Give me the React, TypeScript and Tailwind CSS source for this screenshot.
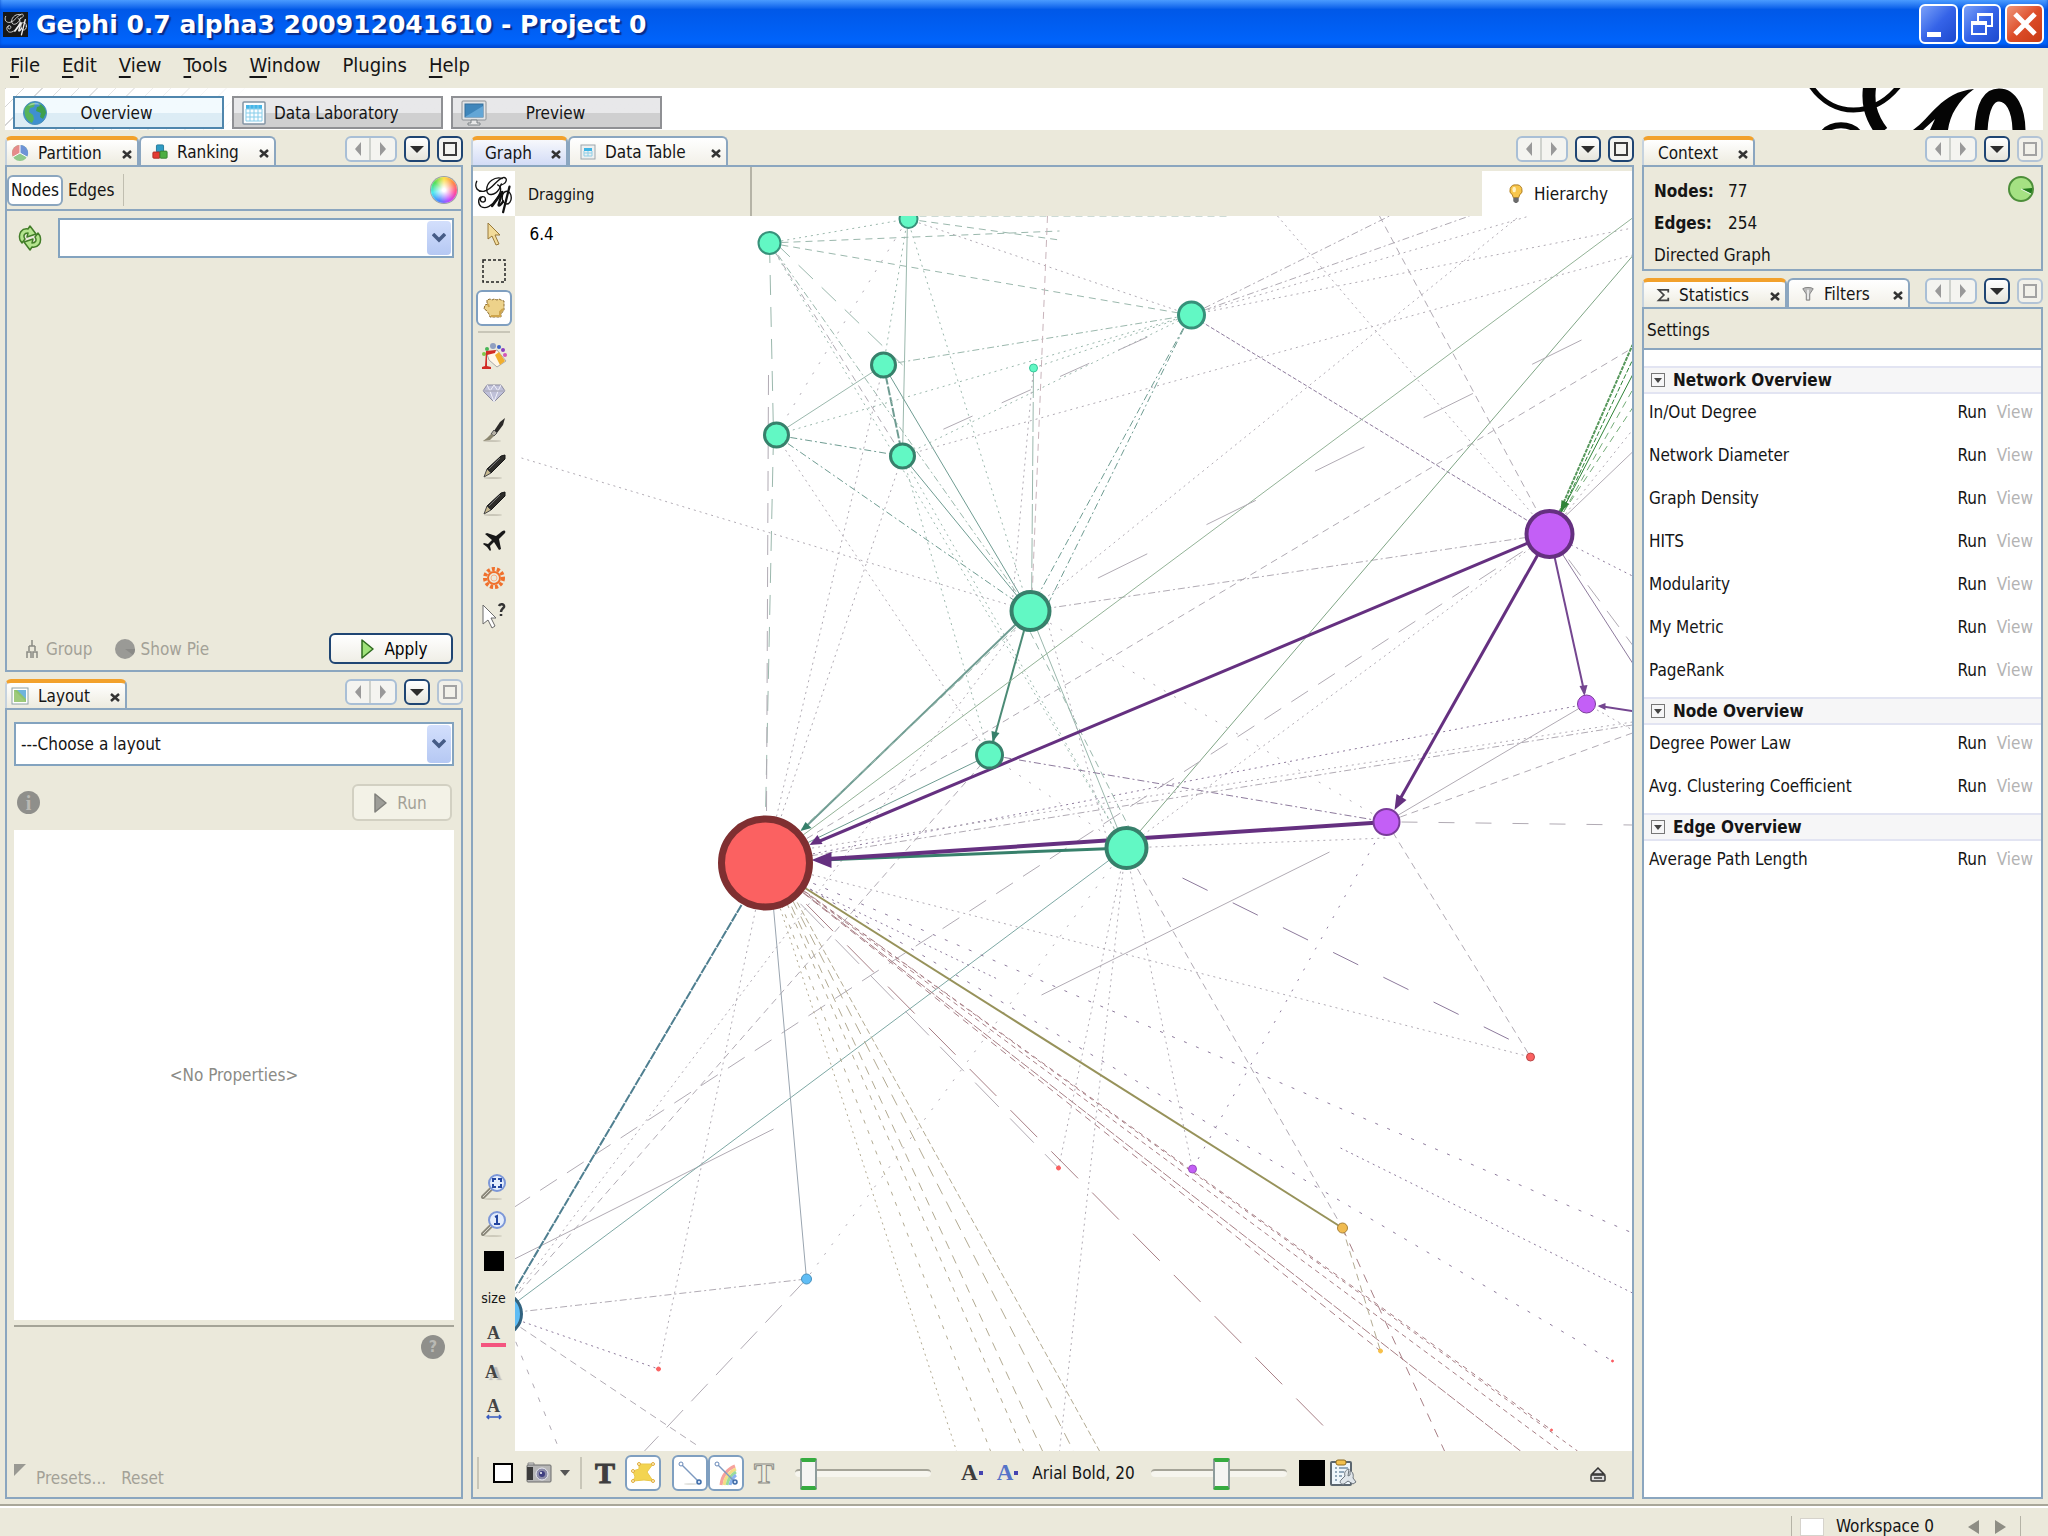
import React from 'react';
import clsx from 'clsx';

type Point = [number, number];

const NODES: { at: Point; r: number; fill: string; stroke: string; sw: number }[] = [
  { at: [770, 243], r: 11, fill: '#62f8c4', stroke: '#37917a', sw: 2 },
  { at: [909, 219], r: 9, fill: '#62f8c4', stroke: '#37917a', sw: 2 },
  { at: [884, 365], r: 12, fill: '#62f8c4', stroke: '#37806b', sw: 3 },
  { at: [777, 435], r: 12, fill: '#62f8c4', stroke: '#37806b', sw: 3 },
  { at: [903, 456], r: 12, fill: '#62f8c4', stroke: '#37806b', sw: 3 },
  { at: [1031, 611], r: 19, fill: '#62f8c4', stroke: '#37806b', sw: 4 },
  { at: [990, 755], r: 13, fill: '#62f8c4', stroke: '#37806b', sw: 3 },
  { at: [1127, 848], r: 20, fill: '#62f8c4', stroke: '#37806b', sw: 4 },
  { at: [1192, 315], r: 13, fill: '#62f8c4', stroke: '#37917a', sw: 3 },
  { at: [1034, 368], r: 4, fill: '#62f8c4', stroke: '#37c79a', sw: 1 },
  { at: [766, 863], r: 44, fill: '#fb6161', stroke: '#7f2f31', sw: 7 },
  { at: [1550, 534], r: 23, fill: '#c35ff6', stroke: '#653080', sw: 4 },
  { at: [1587, 704], r: 9, fill: '#c35ff6', stroke: '#7a3b9a', sw: 1 },
  { at: [1387, 822], r: 13, fill: '#c35ff6', stroke: '#7a3b9a', sw: 2 },
  { at: [1193, 1169], r: 4, fill: '#c35ff6', stroke: '#9a4bc0', sw: 1 },
  { at: [501, 1314], r: 21, fill: '#5fbdf5', stroke: '#31627f', sw: 3 },
  { at: [807, 1279], r: 5, fill: '#5fbdf5', stroke: '#4791bd', sw: 1 },
  { at: [1531, 1057], r: 4, fill: '#fb6161', stroke: '#b94848', sw: 1 },
  { at: [1059, 1168], r: 2, fill: '#fb6161', stroke: '#fb6161', sw: 1 },
  { at: [659, 1369], r: 2, fill: '#fb6161', stroke: '#fb6161', sw: 1 },
  { at: [1552, 1430], r: 1, fill: '#fb6161', stroke: '#fb6161', sw: 1 },
  { at: [1613, 1361], r: 1, fill: '#fb4161', stroke: '#fb6161', sw: 1 },
  { at: [1343, 1228], r: 5, fill: '#f0bb50', stroke: '#a8823a', sw: 1 },
  { at: [1381, 1351], r: 2, fill: '#f7c04a', stroke: '#f7c04a', sw: 1 },
];

const DOT = '2 4';
const DASH = '7 5';
const DASHDOT = '7 3 2 3';
const SPARSE = '2 10';
const LONG = '20 12';

const GREY = '#b1abb4';
const MINT = '#9bb8ad';
const TEAL = '#6f9c92';
const PLUM = '#8d7a9c';
const TAN = '#b3ab93';
const ROSE = '#a87f86';

// x1, y1, x2, y2, colour, dash, width
type Edge = [number, number, number, number, string, string?, number?];

const EDGES: Edge[] = [
  // green cluster
  [770, 243, 908, 219, MINT, DOT],
  [770, 243, 1060, 231, MINT, DASH],
  [908, 216, 1230, 216, MINT, DASH],
  [770, 243, 1191, 315, MINT, DASH],
  [908, 219, 1191, 315, GREY, DOT],
  [908, 219, 1060, 240, MINT, DASH],
  [770, 243, 1030, 611, MINT, DASHDOT],
  [776, 243, 903, 365, MINT, LONG],
  [770, 243, 903, 456, GREY, DASH],
  [770, 243, 1126, 848, MINT, DOT],
  [770, 243, 774, 435, MINT, LONG],
  [774, 435, 766, 815, MINT, LONG],
  [769, 375, 767, 815, GREY, LONG],
  [908, 219, 884, 365, MINT, DOT],
  [908, 219, 903, 456, MINT],
  [908, 219, 1030, 611, MINT, DOT],
  [908, 219, 776, 435, GREY, SPARSE],
  [884, 365, 776, 435, MINT],
  [884, 365, 903, 456, TEAL, '9 2', 2],
  [884, 365, 1030, 611, TEAL],
  [884, 365, 1191, 315, MINT, DASHDOT],
  [884, 365, 766, 863, GREY, DOT],
  [776, 435, 903, 456, TEAL, DASHDOT, 1],
  [776, 435, 1030, 611, TEAL, DASHDOT, 1],
  [776, 435, 1191, 315, MINT, DOT],
  [776, 435, 990, 755, GREY, DOT],
  [903, 456, 1030, 611, TEAL],
  [903, 456, 1191, 315, MINT, DOT],
  [903, 456, 990, 755, MINT, DOT],
  [903, 456, 1126, 848, MINT, DOT],
  [903, 456, 766, 863, GREY, DOT],
  [903, 456, 1633, 255, GREY, DOT],
  [1034, 368, 1191, 315, MINT, DOT],
  [1034, 368, 1032, 611, MINT, '30 4'],
  [1034, 368, 1012, 611, GREY, DOT],
  [1048, 216, 1032, 611, '#c9b4bb', DASH],
  [1191, 315, 1030, 611, TEAL, DASHDOT, 1],
  [1191, 315, 1045, 611, TEAL, DASHDOT, 1],
  [1191, 315, 1470, 216, GREY, DASHDOT],
  [1191, 315, 1530, 216, GREY, DOT],
  [1191, 315, 1633, 228, GREY, DOT],
  [1191, 315, 1390, 216, GREY, DASHDOT],
  [1191, 315, 1550, 534, PLUM, '4 2', 1],
  [522, 458, 1030, 611, GREY, DOT],
  [1030, 611, 1387, 822, GREY, SPARSE],
  [1030, 611, 1550, 534, GREY, DASHDOT],
  [1030, 611, 1520, 216, GREY, DOT],
  [766, 863, 1633, 348, GREY, DASH],
  [1030, 611, 806, 827, TEAL, '', 2],
  [1030, 611, 990, 755, '#4c8b76', '', 2],
  [1030, 611, 1126, 848, MINT],
  [1045, 611, 1110, 848, GREY, DOT],
  [1020, 611, 1140, 848, MINT, DASH],
  [1030, 611, 501, 1314, GREY, DOT],
  [990, 755, 766, 863, TEAL],
  [990, 755, 501, 1314, GREY, DASH],
  [990, 755, 1126, 848, GREY, SPARSE],
  [990, 755, 1387, 822, PLUM, DASHDOT, 1],
  [1034, 611, 766, 863, MINT, DASH],

  // spokes leaving through the right border
  [1633, 218, 766, 863, '#93b397'],
  [1633, 256, 1126, 848, '#7fa585'],
  [1278, 216, 1550, 534, GREY, DOT],
  [1380, 216, 1550, 534, GREY, DASH],
  [1560, 512, 1633, 345, '#57985c', '4 1', 2],
  [1562, 512, 1633, 360, '#2f8438', '5 2', 1],
  [1562, 512, 1633, 375, '#2f8438', '', 1],
  [1564, 512, 1633, 390, '#74ad78', DASH, 1],
  [1564, 512, 1633, 408, '#74ad78', DASH, 1],
  [1566, 514, 1633, 430, GREY, DOT],
  [1566, 516, 1633, 452, GREY],
  [1550, 534, 1633, 576, PLUM, DOT],
  [1550, 534, 1633, 663, PLUM],
  [1550, 534, 1633, 645, GREY, LONG],
  [1550, 534, 515, 1207, GREY, LONG],
  [1550, 534, 1126, 848, GREY, DOT],
  [1587, 704, 766, 863, PLUM, DOT],
  [1633, 725, 766, 863, GREY, DASHDOT],
  [1633, 722, 800, 850, GREY, DOT],
  [1587, 704, 1387, 822, GREY],
  [1633, 733, 1387, 822, GREY, DASH],
  [1587, 704, 1633, 730, GREY, DOT],
  [1402, 822, 1633, 825, GREY, '16 21'],
  [1582, 340, 1060, 597, GREY, '55 66'],
  [1148, 337, 920, 440, GREY, '32 32'],
  [774, 1129, 515, 1259, GREY],
  [1330, 852, 1042, 995, GREY],

  // around the lower hubs
  [1126, 848, 501, 1314, '#7da8a4'],
  [1126, 848, 807, 1279, GREY, SPARSE],
  [1126, 848, 1059, 1168, GREY, DOT],
  [1126, 848, 1060, 1451, GREY, DOT],
  [1126, 848, 1193, 1169, GREY, DOT],
  [1126, 848, 1343, 1228, GREY, DASH],
  [1183, 878, 1515, 1042, PLUM, '28 28'],
  [1387, 822, 1531, 1057, GREY, DASH],
  [1387, 822, 1193, 1169, PLUM, SPARSE],
  [1126, 848, 1387, 838, GREY, DOT],
  [501, 1314, 807, 1279, GREY, DASHDOT],
  [501, 1314, 659, 1369, PLUM, DOT],
  [501, 1314, 700, 1447, GREY, DASH],
  [505, 1314, 560, 1450, GREY, '5 10'],
  [807, 1279, 645, 1451, GREY, '24 12'],
  [766, 863, 659, 1369, GREY, DOT],
  [770, 863, 807, 1279, '#9aa5b0'],
  [742, 905, 501, 1314, '#4f7f90', '9 1', 2],
  [766, 863, 957, 1451, TAN, DOT],
  [766, 863, 991, 1451, TAN, '4 7'],
  [770, 863, 1024, 1451, TAN, '5 6'],
  [772, 863, 1043, 1451, TAN, '9 7'],
  [774, 863, 1074, 1451, TAN, '12 8'],
  [776, 863, 1100, 1451, TAN, '6 3'],
  [766, 863, 1327, 1429, ROSE, '38 20'],
  [766, 868, 1059, 1168, GREY, '34 16'],
  [766, 863, 1531, 1057, GREY, DOT],
  [766, 863, 1633, 1233, PLUM, '3 10'],
  [766, 863, 1613, 1361, PLUM, '3 10'],
  [800, 884, 1000, 980, PLUM, DOT],
  [1341, 1148, 1633, 1293, PLUM, DOT],
  [766, 863, 1343, 1228, '#97925a', '', 2],
  [766, 863, 1521, 1451, ROSE, '10 2', 1],
  [766, 863, 1560, 1451, ROSE, '5 4', 1],
  [766, 863, 1578, 1451, ROSE, '4 4', 1],
  [766, 863, 1552, 1430, ROSE, '5 5'],
  [766, 863, 1381, 1351, ROSE, DASH],
  [1343, 1228, 1381, 1351, TAN, DASH],
  [1343, 1228, 1445, 1451, ROSE, '9 8'],

  // heavy edges
  [1126, 848, 822, 860, '#37806b', '', 3],
  [1387, 822, 828, 859, '#653080', '', 4],
  [1550, 534, 818, 842, '#653080', '', 3],
  [1550, 534, 1400, 800, '#653080', '', 3],
  [1550, 534, 1585, 693, '#744690', '', 2],
  [1633, 711, 1600, 706, '#744690', '', 2],
];

const ARROWS: { points: string; fill: string }[] = [
  { points: '812,860 832,852 832,868', fill: '#653080' },
  { points: '810,845 818,835 823,844', fill: '#653080' },
  { points: '1395,810 1397,794 1407,800', fill: '#653080' },
  { points: '1585,696 1580,686 1588,685', fill: '#744690' },
  { points: '1598,706 1606,703 1606,710', fill: '#744690' },
  { points: '801,831 806,822 812,828', fill: '#37806b' },
  { points: '993,742 992,731 1000,733', fill: '#37806b' },
  { points: '1561,512 1562,500 1570,504', fill: '#2f8438' },
];

const STATISTICS = [
  {
    title: 'Network Overview',
    metrics: ['In/Out Degree', 'Network Diameter', 'Graph Density', 'HITS', 'Modularity', 'My Metric', 'PageRank'],
  },
  { title: 'Node Overview', metrics: ['Degree Power Law', 'Avg. Clustering Coefficient'] },
  { title: 'Edge Overview', metrics: ['Average Path Length'] },
];

const MENU = ['File', 'Edit', 'View', 'Tools', 'Window', 'Plugins', 'Help'];

/* ---------- icons ---------- */

const GephiMark: React.FC<{ className?: string; color?: string }> = ({ className, color = '#111' }) => (
  <svg viewBox="0 0 44 44" className={className} fill="none" stroke={color} strokeLinecap="round">
    <path d="M3 8c-3 7 1 12 8 11 10-2 13-13 21-15 5-1 5 6-2 8" strokeWidth="1.5" />
    <path d="M31 5c-8-3-17 4-17 12 0 8 9 7 14-1l2-5" strokeWidth="1.5" />
    <path d="M26 12c5 2 4 8-1 15-5 8-12 12-17 9-4-3-4-10 1-11 4-1 5 5 1 6-3 0-4-3-2-5" strokeWidth="1.5" />
    <path d="M31 20L20 35" strokeWidth="3" />
    <path d="M31 20l-4 14c0 2 3 0 5-4" strokeWidth="2.5" />
    <ellipse cx="36" cy="26" rx="5" ry="7" strokeWidth="1.5" />
    <path d="M39 14L32 42" strokeWidth="2.5" />
  </svg>
);

const GlobeIcon = () => (
  <svg viewBox="0 0 24 24" className="size-6">
    <circle cx="12" cy="12" r="11.5" fill="#3f8fd0" stroke="#4a90b8" />
    <path d="M2 7c3-5 8-6 10-5l-1 4-4 1-1 4 4 3 1 4-2 4C4 20 0 14 2 7z" fill="#57b45a" />
    <path d="M15 2c5 2 8 6 8 10l-3 6-3-2 1-4-5-2 1-4 3-1z" fill="#3fa04c" />
    <path d="M5 5c4-4 10-4 13-1-5-1-9 0-13 1z" fill="#fff" opacity=".4" />
  </svg>
);

const TableIcon = () => (
  <svg viewBox="0 0 24 24" className="size-6">
    <rect x="1" y="1" width="22" height="22" rx="1" fill="#fafdff" stroke="#8294a4" strokeWidth="1.5" />
    <rect x="4" y="4" width="16" height="4" fill="#45b5e8" />
    <path d="M4 8h16M4 12h16M4 16h16M4 20h16M4 8v12M8 4v16M12 4v16M16 4v16M20 8v12" stroke="#86cdea" />
  </svg>
);

const SmallTableIcon = () => (
  <svg viewBox="0 0 16 16" className="size-4">
    <rect x="1" y="1" width="14" height="14" fill="#eef0f0" stroke="#9ca6ac" />
    <rect x="4" y="4" width="8" height="3" fill="#3fb4e4" />
    <path d="M4 7v5h8V7M8 7v5M4 9h8" fill="none" stroke="#8fcfe8" />
  </svg>
);

const MonitorIcon = () => (
  <svg viewBox="0 0 26 26" className="size-[26px]">
    <rect x="1" y="1" width="24" height="19" rx="1" fill="#e2e4e6" stroke="#8d9296" />
    <rect x="4" y="4" width="18" height="13" fill="#3f86bb" stroke="#356f9c" />
    <path d="M4 17L22 6v11z" fill="#63a6d6" />
    <path d="M10 20h6v3h3v2H7v-2h3z" fill="#e8e8e8" stroke="#7d8286" />
  </svg>
);

const PartitionIcon = () => (
  <svg viewBox="0 0 18 18" className="size-[18px]">
    <circle cx="9" cy="9" r="8" fill="#8fc98c" />
    <path d="M9 9V1a8 8 0 0 1 7 12z" fill="#6d93d6" />
    <path d="M9 9V1a8 8 0 0 0-8 8 8 8 0 0 0 1 4z" fill="#e58b8b" />
    <path d="M9 1v8l7 4M9 9l-7 4" stroke="#fff" fill="none" />
  </svg>
);

const RankingIcon = () => (
  <svg viewBox="0 0 18 18" className="size-4">
    <rect x="5" y="1" width="8" height="8" rx="1" fill="#2f9bc4" stroke="#1f7595" />
    <rect x="1" y="9" width="8" height="7" rx="1" fill="#e23b33" stroke="#a82822" />
    <rect x="9" y="8" width="8" height="8" rx="1" fill="#4cae42" stroke="#347e2d" />
  </svg>
);

const LayoutIcon = () => (
  <svg viewBox="0 0 18 18" className="size-[18px]">
    <rect x="1" y="1" width="16" height="16" fill="#fff" stroke="#8fa2a6" />
    <rect x="3" y="3" width="12" height="12" fill="#8fc46e" />
    <path d="M6 3h9v9z" fill="#6fb4dc" />
    <path d="M3 3l12 12H3z" fill="#9fca7c" />
  </svg>
);

const SigmaIcon = () => (
  <svg viewBox="0 0 16 16" className="size-[14px]" fill="none" stroke="#444" strokeWidth="2">
    <path d="M14 5V2H3l6 6-6 6h11v-3" />
  </svg>
);

const FunnelIcon = () => (
  <svg viewBox="0 0 16 18" className="h-4 w-[14px]">
    <path d="M2 3c2-2 10-2 12 0l-4 6v7H6V9z" fill="#b9b9b9" stroke="#7a7a7a" />
    <path d="M8 4v11" stroke="#eee" strokeWidth="2" />
  </svg>
);

const ColorWheel = () => (
  <span className="block size-[26px] rounded-full bg-[radial-gradient(circle,#fff_8%,transparent_62%),conic-gradient(#ffe14a,#ff8a4a,#ff4a9a,#c04aff,#4a8aff,#4ae8f0,#52e05a,#ffe14a)] ring-1 ring-[#9aa0a6]" />
);

const RefreshIcon = () => (
  <svg viewBox="0 0 26 26" className="size-[26px]" strokeLinejoin="round">
    <path d="M3 15C1 8 5 3 11 4l2-3 6 8-9 3 1-4c-4 0-5 3-3 6l-3 4z" fill="#b4e48e" stroke="#427d28" strokeWidth="1.5" />
    <path d="M23 11c2 7-2 12-8 11l-2 3-6-8 9-3-1 4c4 0 5-3 3-6l3-4z" fill="#b4e48e" stroke="#427d28" strokeWidth="1.5" />
  </svg>
);

const PieIcon = () => (
  <svg viewBox="0 0 28 28" className="size-7">
    <circle cx="14" cy="14" r="12" fill="#a5e183" stroke="#4d8f3a" strokeWidth="2" />
    <path d="M14 14l11-1c0 3 0 4-1 6z" fill="#217a1c" />
    <path d="M14 14l10 5" stroke="#f3fbef" />
  </svg>
);

const GreyPie = () => (
  <svg viewBox="0 0 20 20" className="size-5">
    <circle cx="10" cy="10" r="10" fill="#9a9a96" />
    <path d="M10 10h10c0 3-1 4-2 6z" fill="#8a8a87" />
  </svg>
);

const GroupIcon = () => (
  <svg viewBox="0 0 14 20" className="h-5 w-[14px]" fill="none" stroke="#8a8a84" strokeWidth="1.5">
    <path d="M7 1v6M4 7h6M4 7v5M10 7v5M2 19v-6h4v6M8 19v-6h4v6" />
  </svg>
);

const PlayIcon: React.FC<{ disabled?: boolean }> = ({ disabled }) => (
  <svg viewBox="0 0 14 22" className="h-[22px] w-[14px]">
    <path d="M2 2v18l11-9z" fill={disabled ? '#9d9d98' : '#9fe27a'} stroke={disabled ? '#80807c' : '#2f6b1f'} strokeWidth="1.5" strokeLinejoin="round" />
  </svg>
);

const BulbIcon = () => (
  <svg viewBox="0 0 16 22" className="h-5 w-4">
    <path d="M8 1a6 6 0 0 1 4 11l-1 3H5l-1-3A6 6 0 0 1 8 1z" fill="#f8c64b" stroke="#a97820" />
    <ellipse cx="6" cy="6" rx="2" ry="3" fill="#fff2c2" />
    <path d="M5 15h6v4l-2 2H7l-2-2z" fill="#6b6b6b" />
  </svg>
);

const PointerIcon = () => (
  <svg viewBox="0 0 24 24" className="size-6">
    <path d="M6 1v16l4-3 4 9 3-1-4-9h5z" fill="#f3dc9a" stroke="#98793a" />
  </svg>
);

const MarqueeIcon = () => (
  <svg viewBox="0 0 24 24" className="size-6">
    <rect x="1" y="1" width="22" height="22" fill="none" stroke="#222" strokeWidth="1.5" strokeDasharray="3 2" />
  </svg>
);

const HandIcon = () => (
  <svg viewBox="0 0 24 24" className="size-6">
    <path d="M5 7V4l3-1 2 1 2-1 3 1 2-1 2 1 3 1v9l-3 4v3H8l-1-3-3-4-2-1 1-4 3-1z" fill="#edd28a" stroke="#8c6c30" strokeDasharray="3 1" />
    <path d="M6 8l1 3M9 20h9v-4l3-3" fill="none" stroke="#cfa54c" strokeWidth="2" />
  </svg>
);

const PaintIcon = () => (
  <svg viewBox="0 0 26 26" className="size-[26px]">
    <circle cx="12" cy="3" r="3" fill="#8f9fc0" />
    <circle cx="18" cy="4" r="2" fill="#3a62c8" />
    <circle cx="22" cy="7" r="2" fill="#8a3fc0" />
    <circle cx="24" cy="12" r="2" fill="#d257b8" />
    <circle cx="6" cy="6" r="2" fill="#47b556" />
    <circle cx="3" cy="11" r="2" fill="#7fc84a" />
    <path d="M6 11l10-4 9 11-9 6-8-7z" fill="#fff6e8" stroke="#aaa" />
    <path d="M14 12l4-3 6 9-5 4z" fill="#f0ae2e" />
    <path d="M5 8l10-1-1 3-8 2v11l4 1v2H1v-2l3-1z" fill="#d22b25" />
  </svg>
);

const DiamondIcon = () => (
  <svg viewBox="0 0 24 22" className="h-[22px] w-6" stroke="#8b8ba0" strokeWidth="1">
    <path d="M5 3h14l4 6-11 11L1 9z" fill="#bfc0d8" />
    <path d="M1 9h22M5 3l3 6 4-6 4 6 3-6M8 9l4 11 4-11" fill="none" stroke="#f2f2fa" />
    <path d="M1 9h22" />
  </svg>
);

const BrushIcon = () => (
  <svg viewBox="0 0 24 26" className="h-[26px] w-6">
    <ellipse cx="10" cy="24" rx="9" ry="1" fill="#c9c6b8" />
    <path d="M23 1l-2 7-6 8-3-2 6-9z" fill="#2b2a28" />
    <path d="M12 13l3 3-3 3-3-2z" fill="#b6b2a6" stroke="#555" />
    <path d="M9 17l3 2-4 4-7 1 4-3z" fill="#8b866f" />
  </svg>
);

const PencilIcon = () => (
  <svg viewBox="0 0 24 26" className="h-[26px] w-6">
    <ellipse cx="11" cy="24" rx="9" ry="1" fill="#c9c6b8" />
    <path d="M19 2l4-1v4L9 19l-4-4z" fill="#2e2d2a" stroke="#171717" />
    <path d="M18 4L7 15" stroke="#777" />
    <path d="M5 15l4 4-7 4z" fill="#c7b98f" stroke="#444" />
  </svg>
);

const PlaneIcon = () => (
  <svg viewBox="0 0 24 24" className="size-6">
    <path d="M23 2c-1-1-3 0-5 2l-4 3-9-3-2 1 7 6-4 4-4-1-1 1 4 3 3 4 1-1-1-4 4-4 5 8 2-1-2-10 4-4c2-2 3-3 2-4z" fill="#181818" />
  </svg>
);

const GearIcon = () => (
  <svg viewBox="0 0 24 24" className="size-6" fill="none" stroke="#f0702c">
    <circle cx="12" cy="12" r="9" strokeWidth="4" strokeDasharray="3 2" />
    <circle cx="12" cy="12" r="6" strokeWidth="2" />
    <circle cx="12" cy="12" r="3" stroke="#f7b08a" />
  </svg>
);

const WhatsThisIcon = () => (
  <svg viewBox="0 0 26 28" className="h-7 w-[26px]">
    <path d="M2 4v19l5-4 4 8 3-2-4-8h5z" fill="#fff" stroke="#6b6b6b" />
    <path d="M18 5c1-3 6-2 5 1-1 2-3 2-3 5M20 13v2" fill="none" stroke="#333" strokeWidth="2.5" />
  </svg>
);

const ZoomIcon: React.FC<{ fit?: boolean }> = ({ fit }) => (
  <svg viewBox="0 0 26 26" className="size-[26px]">
    <ellipse cx="12" cy="25" rx="9" ry="1" fill="#cdcabb" />
    <path d="M10 15l-8 8" stroke="#8c897c" strokeWidth="4" strokeLinecap="round" />
    <path d="M10 15l-8 8" stroke="#d8d6cb" strokeWidth="1" />
    <circle cx="16" cy="9" r="8" fill="#e4edfb" stroke="#7c97d8" strokeWidth="2" />
    {fit ? (
      <path d="M12 8V5h3M17 5h3v3M20 10v3h-3M15 13h-3v-3" fill="none" stroke="#2346a0" strokeWidth="2" />
    ) : (
      <path d="M14 6l2-1v8M13 13h6" fill="none" stroke="#2346a0" strokeWidth="2" />
    )}
  </svg>
);

const CameraIcon = () => (
  <svg viewBox="0 0 26 22" className="h-[22px] w-[26px]">
    <path d="M2 1h6v3H2z" fill="#ddd" stroke="#888" />
    <rect x="1" y="3" width="24" height="17" rx="1" fill="#b6b6b6" stroke="#6d6d6d" />
    <rect x="1" y="5" width="6" height="13" fill="#3b3b3b" />
    <circle cx="16" cy="12" r="6" fill="#8c8ca8" stroke="#e8e8f0" />
    <circle cx="16" cy="12" r="3" fill="#3e3e80" />
    <circle cx="15" cy="11" r="1" fill="#fff" />
  </svg>
);

const HullIcon = () => (
  <svg viewBox="0 0 26 24" className="h-6 w-[26px]">
    <path d="M3 10l6-2V3h14l-6 8 6 9-9-1-11 1 2-4z" fill="#f3d450" stroke="#e9c84a" />
    <g fill="#fff4c8" stroke="#e0aa3a">
      <circle cx="9" cy="3" r="1.5" />
      <circle cx="23" cy="3" r="1.5" />
      <circle cx="3" cy="20" r="1.5" />
      <circle cx="23" cy="20" r="1.5" />
      <circle cx="3" cy="10" r="1.5" />
    </g>
  </svg>
);

const EdgeIcon: React.FC<{ rainbow?: boolean }> = ({ rainbow }) => (
  <svg viewBox="0 0 26 26" className="size-[26px]" fill="none">
    {rainbow && (
      <g strokeWidth="3">
        <path d="M8 25C9 15 15 9 22 6" stroke="#f6a29c" />
        <path d="M11 25c1-8 5-13 12-16" stroke="#f4dd85" />
        <path d="M14 25c1-6 4-10 9-13" stroke="#9bdc9a" />
        <path d="M17 25c1-4 2-7 6-10" stroke="#8bb4ef" />
      </g>
    )}
    {!rainbow && <ellipse cx="14" cy="24" rx="7" ry="1" fill="#e2e2de" />}
    <path d="M4 4l18 18" stroke="#7d99c0" strokeWidth="1.5" />
    <circle cx="4" cy="4" r="2" fill="#fff" stroke="#6788b8" />
    <circle cx="22" cy="22" r="2" fill="#cfe0f5" stroke="#3d6ba8" strokeWidth="1.5" />
  </svg>
);

const ClipboardIcon = () => (
  <svg viewBox="0 0 28 28" className="size-7">
    <rect x="2" y="3" width="20" height="23" rx="1" fill="#eef6fb" stroke="#5c6770" strokeWidth="2" />
    <path d="M6 9h2M10 9h9M6 13h2M10 13h5M6 17h2M10 17h3M6 21h2" stroke="#7690a6" strokeWidth="1.5" />
    <rect x="7" y="1" width="10" height="5" rx="2" fill="#f3c04d" stroke="#8d6b20" />
    <path d="M20 10c-4 1-5 4-4 7l-4 4c-2 2 0 5 3 4l4-3 5 3 3-2-3-4c1-4-1-7-3-7v4l-2 1z" fill="#dfe5e9" stroke="#6d757c" />
  </svg>
);

const EjectIcon = () => (
  <svg viewBox="0 0 16 16" className="size-4" fill="#ddd" stroke="#333" strokeWidth="1.5">
    <path d="M8 1l6 6H2z" />
    <rect x="1" y="8" width="14" height="6" rx="1" />
    <path d="M4 11h8" />
  </svg>
);

const HeaderArt = () => (
  <svg viewBox="0 0 234 42" className="h-[42px] w-[234px]" fill="none" stroke="#050505">
    <path d="M2-2c22 32 62 32 88 0" strokeWidth="5" />
    <path d="M61-4c-3 18 0 32 12 48" strokeWidth="13" />
    <path d="M15 44c8-9 26-9 34 0" strokeWidth="6" />
    <path d="M104 42c18-12 28-38 61-41-16 12-24 26-26 41h-18l5-11-12 11z" fill="#050505" stroke="none" />
    <path d="M172 44c1-26 8-37 18-37 12 0 20 14 20 37" strokeWidth="13" />
  </svg>
);

/* ---------- small parts ---------- */

const TabButton: React.FC<{
  label: string;
  className: string;
  icon?: React.ReactNode;
  active?: boolean;
  tinted?: boolean;
}> = ({ label, className, icon, active, tinted }) => (
  <div
    className={clsx(
      'flex h-[29px] items-center justify-between rounded-t-md border-x-2 border-t-2 border-[#8ba6c0] pr-[5px]',
      className,
      active && 'border-t-4 border-t-[#f2a12c] border-l-[#c5d2de]',
      tinted ? 'bg-linear-to-b from-[#f7f8fc] to-[#d3dcf6]' : active ? 'bg-linear-to-b from-white to-[#edebdf]' : 'bg-linear-to-b from-white to-[#f2f0e8]'
    )}
  >
    <button type="button" className="flex items-center gap-[9px] whitespace-nowrap">
      {icon}
      {label}
    </button>
    <button type="button" aria-label={`Close ${label}`} className="pt-1">
      <svg viewBox="0 0 10 9" className="h-[9px] w-[10px]" stroke="#333" strokeWidth="2.5">
        <path d="M1 1l8 7M9 1L1 8" />
      </svg>
    </button>
  </div>
);

const WindowControls: React.FC<{ canMaximize?: boolean }> = ({ canMaximize }) => (
  <div className="ml-auto flex items-start gap-[7px]">
    <div className="flex h-[26px] overflow-hidden rounded-md border-2 border-[#a9bfd6] bg-[#f4f4f0]">
      <button type="button" aria-label="Scroll left" className="flex w-6 items-center justify-center border-r-2 border-[#cfd2cd]">
        <svg viewBox="0 0 8 14" className="h-[14px] w-2"><path d="M7 0v14L1 7z" fill="#999" /></svg>
      </button>
      <button type="button" aria-label="Scroll right" className="flex w-6 items-center justify-center">
        <svg viewBox="0 0 8 14" className="h-[14px] w-2"><path d="M1 0v14l6-7z" fill="#999" /></svg>
      </button>
    </div>
    <button type="button" aria-label="Show opened windows" className="flex size-[26px] items-center justify-center rounded-md border-2 border-[#1f4573] bg-linear-to-b from-white to-[#e6e5dc]">
      <svg viewBox="0 0 14 8" className="h-2 w-[14px]"><path d="M0 1h14L7 8z" fill="#2d2d2d" /></svg>
    </button>
    <button
      type="button"
      aria-label="Maximize window"
      className={clsx('flex size-[26px] items-center justify-center rounded-md border-2', canMaximize ? 'border-[#1f4573] bg-[#f4f4f0]' : 'border-[#b3c4d6] bg-[#f2f1ea]')}
    >
      <span className={clsx('block size-[14px] border-2', canMaximize ? 'border-[#3b3b3b]' : 'border-[#a3a3a3]')} />
    </button>
  </div>
);

const Combo: React.FC<{ label: string; value: string; className: string }> = ({ label, value, className }) => (
  <div className={clsx('relative min-w-0 flex-1', className)}>
    <select aria-label={label} className="size-full appearance-none border-2 border-[#83a3bf] bg-white pl-[5px]">
      <option>{value}</option>
    </select>
    <span className="pointer-events-none absolute inset-y-[3px] right-[3px] flex w-6 items-center justify-center rounded-sm bg-linear-to-b from-[#d3dffc] to-[#b5c8f3]">
      <svg viewBox="0 0 14 10" className="h-[10px] w-[14px]" fill="none" stroke="#465c86" strokeWidth="3.5">
        <path d="M1 1l6 6 6-6" />
      </svg>
    </span>
  </div>
);

const ToolSlider: React.FC<{ label: string; value: number }> = ({ label, value }) => (
  <input
    type="range"
    aria-label={label}
    defaultValue={value}
    className="h-8 w-[136px] appearance-none bg-transparent [&::-webkit-slider-runnable-track]:h-2 [&::-webkit-slider-runnable-track]:rounded-sm [&::-webkit-slider-runnable-track]:border-t-2 [&::-webkit-slider-runnable-track]:border-[#a5a498] [&::-webkit-slider-runnable-track]:bg-[#f6f5ee] [&::-webkit-slider-thumb]:mt-[-13px] [&::-webkit-slider-thumb]:h-8 [&::-webkit-slider-thumb]:w-[17px] [&::-webkit-slider-thumb]:appearance-none [&::-webkit-slider-thumb]:rounded-xs [&::-webkit-slider-thumb]:border-x-2 [&::-webkit-slider-thumb]:border-y-4 [&::-webkit-slider-thumb]:border-x-[#8e9c9c] [&::-webkit-slider-thumb]:border-y-[#36ab40] [&::-webkit-slider-thumb]:bg-[#f5f5f2]"
  />
);

const ToolButton: React.FC<{ label: string; active?: boolean; children: React.ReactNode }> = ({ label, active, children }) => (
  <button
    type="button"
    aria-label={label}
    className={clsx('flex size-9 shrink-0 items-center justify-center rounded-md', active && 'border-2 border-[#7f9fc0] bg-white')}
  >
    {children}
  </button>
);

const Separator = () => <span className="h-8 w-[2px] shrink-0 bg-[#c8c6b8]" />;

/* ---------- panels ---------- */

const TitleBar = () => (
  <header className="flex h-12 shrink-0 items-center bg-linear-to-b from-[#4a9bff] via-[#0058e8] via-20% to-[#0066ff] pr-1 pl-[3px] shadow-[inset_0_-3px_3px_#0048d0]">
    <span className="flex size-[25px] items-center justify-center bg-[#181818]">
      <GephiMark className="size-6" color="#eee" />
    </span>
    <h1 className="ml-2 pt-px font-['DejaVu_Sans'] text-[25px] font-bold text-white [text-shadow:2px_2px_1px_#0a2c8a]">
      Gephi 0.7 alpha3 200912041610 - Project 0
    </h1>
    <div className="ml-auto flex gap-1">
      <button type="button" aria-label="Minimize" className="flex h-10 w-[39px] items-end rounded-md border-2 border-white bg-linear-to-br from-[#7ba0f8] via-[#3563e8] to-[#1c49cf] pb-[5px] pl-[6px]">
        <span className="block h-[5px] w-[14px] bg-white" />
      </button>
      <button type="button" aria-label="Restore" className="flex h-10 w-[39px] items-center justify-center rounded-md border-2 border-white bg-linear-to-br from-[#7ba0f8] via-[#3563e8] to-[#1c49cf]">
        <svg viewBox="0 0 24 24" className="size-6" fill="none" stroke="#fff" strokeWidth="2">
          <path d="M8 9V2h14v12h-5M8 3h14" />
          <rect x="2" y="10" width="14" height="12" />
          <path d="M2 11h14" strokeWidth="4" />
        </svg>
      </button>
      <button type="button" aria-label="Close" className="flex h-10 w-[39px] items-center justify-center rounded-md border-2 border-white bg-linear-to-br from-[#ee9578] via-[#dd4d28] to-[#c83a14]">
        <svg viewBox="0 0 24 24" className="size-6" stroke="#fff" strokeWidth="5">
          <path d="M2 2l20 20M22 2L2 22" />
        </svg>
      </button>
    </div>
  </header>
);

const MenuBar = () => (
  <nav className="flex h-10 shrink-0 items-center gap-[22px] pb-[6px] pl-[10px] text-[20px]">
    {MENU.map((item) => (
      <button key={item} type="button">
        {item === 'Plugins' ? item : (
          <>
            <span className="underline underline-offset-4">{item[0]}</span>
            {item.slice(1)}
          </>
        )}
      </button>
    ))}
  </nav>
);

const PerspectiveBar = () => {
  const inactive = 'border-[#8f9094] bg-linear-to-b from-[#e8e8ea] from-50% to-[#cfcfd0] to-50%';
  const base = 'flex h-[33px] w-[211px] items-center border-2 pl-2';
  return (
    <div className="mx-[5px] flex h-[42px] shrink-0 items-end gap-2 overflow-hidden bg-white bg-[linear-gradient(to_right,transparent,white_260px),repeating-linear-gradient(135deg,#d5d5d5_0_1px,#fff_1px_13px)] pb-px pl-2">
      <button type="button" className={clsx(base, 'border-[#4f86ad] bg-linear-to-b from-[#f2fafe] from-50% to-[#dcecf5] to-50%')}>
        <GlobeIcon />
        <span className="flex-1 pr-9 text-center">Overview</span>
      </button>
      <button type="button" className={clsx(base, inactive)}>
        <TableIcon />
        <span className="ml-2">Data Laboratory</span>
      </button>
      <button type="button" className={clsx(base, inactive)}>
        <MonitorIcon />
        <span className="flex-1 pr-9 text-center">Preview</span>
      </button>
      <div className="-mb-px ml-auto">
        <HeaderArt />
      </div>
    </div>
  );
};

const PartitionPanel = () => (
  <section className="flex h-[536px] flex-col">
    <div className="flex">
      <TabButton label="Partition" className="w-[134px] pl-1" icon={<PartitionIcon />} active />
      <TabButton label="Ranking" className="w-[137px] pl-[11px]" icon={<RankingIcon />} />
      <WindowControls canMaximize />
    </div>
    <div className="flex flex-1 flex-col border-2 border-[#8ba6bf]">
      <div className="flex h-11 items-center border-b-2 border-[#8ba6bf] pt-1 pr-1">
        <button type="button" className="h-[31px] w-[56px] rounded-md border-2 border-[#8ba6bf] bg-white">Nodes</button>
        <button type="button" className="px-[5px]">Edges</button>
        <span className="ml-1 h-8 w-px bg-[#c0beb0]" />
        <span className="ml-auto"><ColorWheel /></span>
      </div>
      <div className="flex items-center gap-[15px] px-[7px] pt-[7px] pl-[10px]">
        <button type="button" aria-label="Refresh"><RefreshIcon /></button>
        <Combo label="Partition parameter" value="" className="h-10" />
      </div>
      <div className="mt-auto flex items-center pr-2 pb-[6px] pl-[18px] text-[#a3a197]">
        <button type="button" disabled className="flex items-center gap-[7px]"><GroupIcon />Group</button>
        <button type="button" disabled className="ml-[22px] flex items-center gap-[6px]"><GreyPie />Show Pie</button>
        <button type="button" className="ml-auto flex h-[31px] w-[124px] items-center justify-center gap-[10px] rounded-md border-2 border-[#1f4573] bg-linear-to-b from-white to-[#efeee6] pl-[6px] text-black">
          <PlayIcon />
          Apply
        </button>
      </div>
    </div>
  </section>
);

const LayoutPanel = () => (
  <section className="flex min-h-0 flex-1 flex-col">
    <div className="flex">
      <TabButton label="Layout" className="w-[122px] pl-1" icon={<LayoutIcon />} active />
      <WindowControls />
    </div>
    <div className="flex min-h-0 flex-1 flex-col border-2 border-[#8ba6bf] px-[7px] pt-3">
      <div className="flex">
        <Combo label="Layout" value="---Choose a layout" className="h-11" />
      </div>
      <div className="mt-[18px] flex items-center justify-between pl-[3px]">
        <span className="flex size-[23px] items-center justify-center rounded-full bg-[#8f8f8b] font-['Liberation_Serif'] text-[20px] font-bold text-[#b9b9b4]">i</span>
        <button type="button" disabled className="mr-[2px] flex h-[37px] w-[100px] items-center justify-center gap-[10px] rounded-md border-2 border-[#d2d0c2] bg-[#f3f2e7] pr-1 text-[#a3a197]">
          <PlayIcon disabled />
          Run
        </button>
      </div>
      <div className="mt-[9px] flex min-h-0 flex-1 items-center justify-center bg-white text-[#8b8b86]">&lt;No Properties&gt;</div>
      <div className="mt-[5px] flex h-[172px] flex-col justify-between border-t-2 border-[#a5a498] pt-2 pb-[5px]">
        <button type="button" aria-label="Help" className="mr-[9px] size-6 self-end rounded-full bg-[#8f8f8b] text-base font-bold text-[#b9b9b4]">?</button>
        <div className="flex items-center text-[#a3a197]">
          <svg viewBox="0 0 12 12" className="mr-[10px] mb-4 size-3"><path d="M0 0h12L0 12z" fill="#999993" /></svg>
          <button type="button" disabled>Presets...</button>
          <button type="button" disabled className="ml-[15px]">Reset</button>
        </div>
      </div>
    </div>
  </section>
);

const NetworkCanvas = () => (
  <svg viewBox="515 216 1118 1235" preserveAspectRatio="xMidYMid slice" className="min-h-0 min-w-0 flex-1 bg-white">
    {EDGES.map(([x1, y1, x2, y2, stroke, dash, width], i) => (
      <line key={i} x1={x1} y1={y1} x2={x2} y2={y2} stroke={stroke} strokeDasharray={dash || undefined} strokeWidth={width ?? 1} />
    ))}
    {ARROWS.map((a) => (
      <polygon key={a.points} points={a.points} fill={a.fill} />
    ))}
    {NODES.map((n) => (
      <circle key={n.at.join()} cx={n.at[0]} cy={n.at[1]} r={n.r} fill={n.fill} stroke={n.stroke} strokeWidth={n.sw} />
    ))}
    <text x="530" y="240" fontSize="17">6.4</text>
  </svg>
);

const GraphPanel = () => (
  <section className="flex min-w-0 flex-1 flex-col">
    <div className="flex">
      <TabButton label="Graph" className="w-[97px] pl-3" active tinted />
      <TabButton label="Data Table" className="w-[160px] pl-[10px]" icon={<SmallTableIcon />} />
      <WindowControls canMaximize />
    </div>
    <div className="flex min-h-0 flex-1 flex-col border-2 border-[#8ba6bf]">
      <div className="flex h-[49px] shrink-0 items-stretch">
        <span className="mt-1 flex w-[42px] items-center justify-center bg-white"><GephiMark className="size-10" /></span>
        <span className="flex w-[237px] items-center border-r-2 border-[#b5b3a6] pt-[6px] pl-[13px] text-base">Dragging</span>
        <button type="button" className="mt-1 ml-auto flex w-[150px] items-center justify-center gap-[10px] bg-white pl-[2px]">
          <BulbIcon />
          Hierarchy
        </button>
      </div>
      <div className="flex min-h-0 flex-1">
        <div className="flex w-[42px] shrink-0 flex-col items-center gap-px overflow-hidden pr-px pb-6">
          <ToolButton label="Select"><PointerIcon /></ToolButton>
          <ToolButton label="Rectangle selection"><MarqueeIcon /></ToolButton>
          <ToolButton label="Drag" active><HandIcon /></ToolButton>
          <span className="my-1 h-[2px] w-8 shrink-0 bg-[#c8c6b8]" />
          <ToolButton label="Painter"><PaintIcon /></ToolButton>
          <ToolButton label="Sizer"><DiamondIcon /></ToolButton>
          <ToolButton label="Brush"><BrushIcon /></ToolButton>
          <ToolButton label="Node pencil"><PencilIcon /></ToolButton>
          <ToolButton label="Edge pencil"><PencilIcon /></ToolButton>
          <ToolButton label="Shortest path"><PlaneIcon /></ToolButton>
          <ToolButton label="Heat map"><GearIcon /></ToolButton>
          <ToolButton label="Edit"><WhatsThisIcon /></ToolButton>
          <span className="flex-1" />
          <ToolButton label="Center on graph"><ZoomIcon fit /></ToolButton>
          <ToolButton label="Reset zoom"><ZoomIcon /></ToolButton>
          <ToolButton label="Default color"><span className="block size-5 bg-black" /></ToolButton>
          <ToolButton label="Default size"><span className="text-sm">size</span></ToolButton>
          <ToolButton label="Label color"><span className="border-b-4 border-[#f4557f] px-[6px] font-['Liberation_Serif'] text-lg leading-5 font-bold text-[#444]">A</span></ToolButton>
          <ToolButton label="Label shadow"><span className="pr-1 font-['Liberation_Serif'] text-lg font-bold text-[#444] [text-shadow:4px_2px_1px_#bbb]">A</span></ToolButton>
          <ToolButton label="Label size">
            <span className="flex flex-col items-center font-['Liberation_Serif'] text-lg leading-4 font-bold text-[#444]">
              A
              <svg viewBox="0 0 16 6" className="h-[6px] w-4" fill="none" stroke="#3659c0" strokeWidth="1.5"><path d="M1 3h14M3 1L1 3l2 2M13 1l2 2-2 2" /></svg>
            </span>
          </ToolButton>
        </div>
        <NetworkCanvas />
      </div>
      <div className="flex h-[46px] shrink-0 items-center pb-[3px] pl-[4px]">
        <Separator />
        <button type="button" aria-label="Background color" className="ml-[14px] size-5 border-2 border-black bg-white" />
        <button type="button" aria-label="Screenshot" className="ml-[13px]"><CameraIcon /></button>
        <button type="button" aria-label="Screenshot options" className="mr-[10px] ml-2">
          <svg viewBox="0 0 10 6" className="h-[6px] w-[10px]"><path d="M0 0h10L5 6z" fill="#555" /></svg>
        </button>
        <Separator />
        <button type="button" aria-label="Show node labels" className="mr-2 ml-[11px] w-6 font-['Liberation_Serif'] text-[30px] leading-8 font-bold text-[#3e3e3e] [-webkit-text-stroke:1px_#3e3e3e]">T</button>
        <ToolButton label="Show hulls" active><HullIcon /></ToolButton>
        <span className="mr-[5px] ml-[6px]"><Separator /></span>
        <ToolButton label="Show edges" active><EdgeIcon /></ToolButton>
        <ToolButton label="Edge color" active><EdgeIcon rainbow /></ToolButton>
        <button type="button" aria-label="Show edge labels" className="mr-[19px] ml-2 w-6 font-['Liberation_Serif'] text-[30px] leading-8 font-bold text-[#eeede2] [-webkit-text-stroke:1px_#8b8b84]">T</button>
        <ToolSlider label="Edge weight" value={4} />
        <span className="ml-[18px]"><Separator /></span>
        <button type="button" aria-label="Label mode" className="ml-3 flex items-center font-['Liberation_Serif'] text-[23px] font-bold text-[#3e3e3e]">
          A<span className="ml-px size-1 bg-[#4444b0]" />
        </button>
        <button type="button" aria-label="Label color mode" className="ml-[14px] flex items-center font-['Liberation_Serif'] text-[23px] font-bold text-[#5574c8]">
          A<span className="ml-px size-1 bg-[#4444b0]" />
        </button>
        <button type="button" className="mr-4 ml-[14px] whitespace-nowrap">Arial Bold, 20</button>
        <ToolSlider label="Label size" value={52} />
        <button type="button" aria-label="Label color" className="ml-3 h-[26px] w-[26px] bg-black" />
        <button type="button" aria-label="Attributes" className="ml-1"><ClipboardIcon /></button>
        <button type="button" aria-label="Expand" className="mt-1 mr-[26px] ml-auto"><EjectIcon /></button>
      </div>
    </div>
  </section>
);

const ContextPanel = () => (
  <section className="flex flex-col">
    <div className="flex">
      <TabButton label="Context" className="w-[113px] pl-[14px]" active />
      <WindowControls />
    </div>
    <div className="flex h-[106px] items-start justify-between border-2 border-[#8ba6bf] py-2 pr-[6px] pl-[10px] leading-8">
      <dl className="grid grid-cols-[74px_auto]">
        <dt className="font-bold">Nodes:</dt>
        <dd>77</dd>
        <dt className="font-bold">Edges:</dt>
        <dd>254</dd>
        <dd className="col-span-2">Directed Graph</dd>
      </dl>
      <PieIcon />
    </div>
  </section>
);

const StatisticsPanel = () => (
  <section className="flex min-h-0 flex-1 flex-col">
    <div className="flex">
      <TabButton label="Statistics" className="w-[145px] pl-3" icon={<SigmaIcon />} active />
      <TabButton label="Filters" className="w-[123px] pl-3" icon={<FunnelIcon />} />
      <WindowControls />
    </div>
    <div className="flex min-h-0 flex-1 flex-col border-2 border-[#8ba6bf] bg-white">
      <div className="flex h-[41px] shrink-0 items-center border-b-2 border-[#8ba6bf] bg-[#ebe9db] pt-[2px] pl-[3px]">
        <button type="button">Settings</button>
      </div>
      <div className="pt-4">
        {STATISTICS.map((group) => (
          <div key={group.title} className="pb-[2px]">
            <h2 className="flex h-7 items-center gap-[8px] border-y-2 border-[#e2e4f2] bg-[#f6f6f7] pl-[7px] font-bold">
              <button type="button" aria-label={`Collapse ${group.title}`} className="flex size-[14px] items-center justify-center border border-[#777]">
                <svg viewBox="0 0 8 5" className="h-[5px] w-2"><path d="M0 0h8L4 5z" fill="#444" /></svg>
              </button>
              {group.title}
            </h2>
            <ul>
              {group.metrics.map((metric) => (
                <li key={metric} className="flex h-[43px] items-center pr-2 pb-[7px] pl-[5px]">
                  <span className="flex-1">{metric}</span>
                  <button type="button" className="mr-[10px]">Run</button>
                  <button type="button" disabled className="text-[#b3b3b3]">View</button>
                </li>
              ))}
            </ul>
          </div>
        ))}
      </div>
    </div>
  </section>
);

const StatusBar = () => (
  <footer className="mt-[5px] flex h-8 shrink-0 items-end justify-end border-t-2 border-[#a9a799] pr-5 shadow-[inset_0_2px_#fff]">
    <span className="h-5 w-px bg-[#b5b3a6]" />
    <span className="mr-3 ml-2 h-[18px] w-6 border border-[#d6d3cc] bg-white" />
    <span className="leading-5">Workspace 0</span>
    <button type="button" aria-label="Previous workspace" className="mb-[2px] ml-[34px]">
      <svg viewBox="0 0 11 14" className="h-[14px] w-[11px]"><path d="M11 0v14L0 7z" fill="#8e8d84" /></svg>
    </button>
    <button type="button" aria-label="Next workspace" className="mr-[14px] mb-[2px] ml-4">
      <svg viewBox="0 0 11 14" className="h-[14px] w-[11px]"><path d="M0 0v14l11-7z" fill="#8e8d84" /></svg>
    </button>
    <span className="mr-[7px] h-5 w-px bg-[#b5b3a6]" />
  </footer>
);

const App: React.FC = () => (
  <div className="flex h-screen flex-col overflow-hidden bg-[#ebe9db] font-['DejaVu_Sans_Condensed','Noto_Sans',sans-serif] text-[17px] leading-6 text-[#151515]">
    <TitleBar />
    <MenuBar />
    <PerspectiveBar />
    <main className="flex min-h-0 flex-1 gap-2 px-[5px] pt-[6px]">
      <div className="flex w-[458px] shrink-0 flex-col gap-[7px]">
        <PartitionPanel />
        <LayoutPanel />
      </div>
      <GraphPanel />
      <div className="flex w-[401px] shrink-0 flex-col gap-[7px]">
        <ContextPanel />
        <StatisticsPanel />
      </div>
    </main>
    <StatusBar />
  </div>
);

export default App;
